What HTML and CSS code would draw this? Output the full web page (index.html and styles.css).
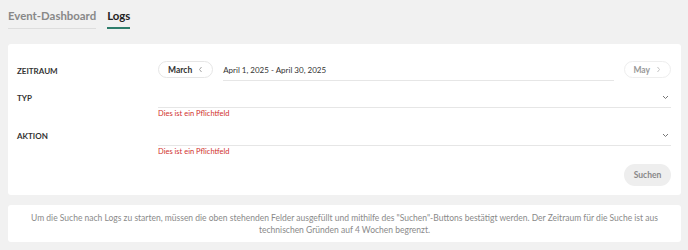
FILE: index.html
```html
<!DOCTYPE html>
<html lang="de">
<head>
    <meta charset="UTF-8">
    <meta name="viewport" content="width=device-width, initial-scale=1.0">
    <title>Logs</title>
    <link rel="stylesheet" href="styles.css">
</head>
<body>

    <!-- Tabs -->
    <nav class="tabs">
        <a class="tab">Event-Dashboard</a>
        <a class="tab active">Logs</a>
    </nav>

    <!-- Filter Card -->
    <section class="card filter-card">
        <div class="row row-period">
            <div class="label">Zeitraum</div>
            <div class="field period">
                <button class="pill">March
                    <svg width="5" height="7" viewBox="0 0 5 7"><path d="M3.5 1L1.5 3.5L3.5 6" fill="none" stroke="#999" stroke-width="0.9"/></svg>
                </button>
                <div class="date-input">April 1, 2025 - April 30, 2025</div>
                <button class="pill disabled">May
                    <svg width="5" height="7" viewBox="0 0 5 7"><path d="M1.5 1L3.5 3.5L1.5 6" fill="none" stroke="#bbb" stroke-width="0.9"/></svg>
                </button>
            </div>
        </div>

        <div class="row">
            <div class="label">Typ</div>
            <div class="field">
                <div class="select">
                    <svg width="7" height="5" viewBox="0 0 7 5"><path d="M1 1l2.5 2.5L6 1" fill="none" stroke="#777" stroke-width="1"/></svg>
                </div>
                <div class="error">Dies ist ein Pflichtfeld</div>
            </div>
        </div>

        <div class="row">
            <div class="label">Aktion</div>
            <div class="field">
                <div class="select">
                    <svg width="7" height="5" viewBox="0 0 7 5"><path d="M1 1l2.5 2.5L6 1" fill="none" stroke="#777" stroke-width="1"/></svg>
                </div>
                <div class="error">Dies ist ein Pflichtfeld</div>
            </div>
        </div>

        <div class="actions">
            <button class="search-btn">Suchen</button>
        </div>
    </section>

    <!-- Info Card -->
    <section class="card info-card">
        <p>Um die Suche nach Logs zu starten, müssen die oben stehenden Felder ausgefüllt und mithilfe des "Suchen"-Buttons bestätigt werden. Der Zeitraum für die Suche ist aus technischen Gründen auf 4 Wochen begrenzt.</p>
    </section>

</body>
</html>
```

FILE: styles.css
```css
/* Basic Reset */
* {
    margin: 0;
    padding: 0;
    box-sizing: border-box;
}

body {
    font-family: 'Lato', 'Open Sans', sans-serif;
    background-color: #f1f1f1;
    color: #333;
    padding: 0 7px 0 8px;
}

/* Tabs */
.tabs {
    display: flex;
    gap: 11px;
    height: 29px;
    padding-top: 8px;
}

.tab {
    font-size: 11.4px;
    font-weight: 700;
    color: #888;
    line-height: 16px;
    border-bottom: 1px solid #ddd;
    height: 21px;
}

.tab.active {
    color: #222;
    border-bottom: 2px solid #2e7d6b;
}

/* Cards */
.card {
    background-color: #fff;
    border-radius: 3px;
}

.filter-card {
    margin-top: 15px;
    padding: 17px 10px 9px 9px;
}

.row {
    display: grid;
    grid-template-columns: 141px 1fr;
    margin-top: 7px;
}

.row-period {
    margin-top: 0;
    margin-bottom: 2px;
}

.label {
    font-size: 8px;
    font-weight: 700;
    text-transform: uppercase;
    line-height: 20px;
    color: #333;
}

.period {
    display: flex;
    align-items: center;
    gap: 10px;
    height: 20px;
}

.pill {
    font-family: inherit;
    font-size: 8.5px;
    font-weight: 700;
    color: #333;
    background: #fff;
    border: 1px solid #e6e6e6;
    border-radius: 10px;
    height: 17px;
    padding: 0 9px 0 9px;
    display: flex;
    align-items: center;
    gap: 6px;
    margin-top: -3px;
}

.pill.disabled {
    color: #999;
    border-color: #eee;
    padding: 0 9px 0 8px;
}

.date-input {
    flex: 1;
    height: 20px;
    font-size: 8px;
    line-height: 18px;
    color: #333;
    border-bottom: 1px solid #e6e6e6;
}

.select {
    height: 20px;
    border-bottom: 1px solid #e6e6e6;
    display: flex;
    justify-content: flex-end;
    align-items: center;
    padding-right: 2px;
}

.error {
    font-size: 7.5px;
    color: #d0312d;
    line-height: 11px;
}

.actions {
    display: flex;
    justify-content: flex-end;
    margin-top: 7px;
}

.search-btn {
    font-family: inherit;
    font-size: 8.5px;
    font-weight: 700;
    color: #888;
    background: #eee;
    border: none;
    border-radius: 12px;
    width: 47px;
    height: 22px;
}

/* Info Card */
.info-card {
    margin-top: 10px;
    padding: 7px 20px 6px;
    text-align: center;
}

.info-card p {
    font-size: 8.5px;
    color: #8a8a8a;
    line-height: 12px;
}
```
